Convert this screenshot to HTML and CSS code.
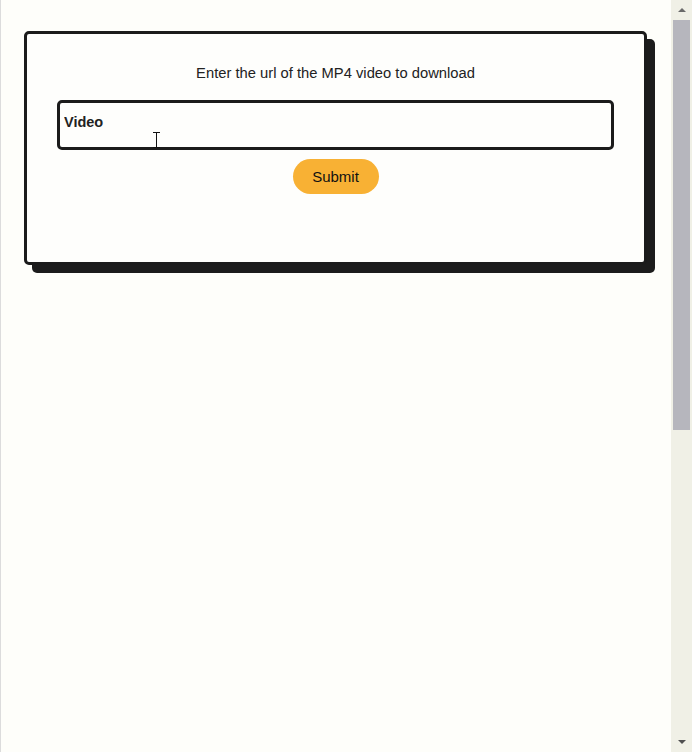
FILE: index.html
```html
<!DOCTYPE html>
<html lang="en">
<head>
<meta charset="utf-8">
<title>MP4 Downloader</title>
<link rel="stylesheet" href="styles.css">
</head>
<body>
<div class="page">
  <main class="main">
    <form class="card">
      <p class="title">Enter the url of the MP4 video to download</p>
      <div class="field">
        <input class="url" type="text" placeholder="Video">
        <svg class="ibeam" width="9" height="16" viewBox="0 0 9 16"><path d="M1 0.5h7M4.5 0.5v15M1 15.5h7" stroke="#111" stroke-width="1" fill="none"/></svg>
      </div>
      <button class="submit" type="button">Submit</button>
    </form>
  </main>
  <div class="scrollbar">
    <div class="arrow up"></div>
    <div class="track"><div class="thumb"></div></div>
    <div class="arrow down"></div>
  </div>
</div>
</body>
</html>
```
FILE: styles.css
```css
html, body {
  margin: 0;
  padding: 0;
  height: 100%;
  overflow: hidden;
}
body {
  background: #fefefa;
  font-family: "Liberation Sans", Arial, sans-serif;
  color: #222;
}
.page {
  display: flex;
  height: 100vh;
  border-left: 1px solid #dcdcdc;
  box-sizing: border-box;
}
.main {
  flex: 1;
  padding: 31px 24px 0 23px;
}
.card {
  margin: 0;
  border: 3px solid #1b1b1b;
  border-radius: 5px;
  box-shadow: 8px 8px 0 #1c1c1c;
  padding: 31px 30px 68px;
  display: flex;
  flex-direction: column;
  align-items: center;
  background: #fefefc;
}
.title {
  margin: 0;
  font-size: 14.75px;
  line-height: 17px;
  color: #222;
}
.field {
  position: relative;
  align-self: stretch;
  margin-top: 18px;
}
.url {
  display: block;
  width: 100%;
  box-sizing: border-box;
  height: 50px;
  border: 3px solid #1b1b1b;
  border-radius: 5px;
  background: transparent;
  padding: 0 4px 7px;
  font-family: "Liberation Sans", Arial, sans-serif;
  font-size: 14.5px;
  font-weight: bold;
  color: #222;
  outline: none;
}
.url::placeholder {
  color: #222;
  opacity: 1;
}
.ibeam {
  position: absolute;
  left: 95px;
  top: 32px;
}
.submit {
  margin-top: 9px;
  width: 86px;
  height: 35px;
  border: none;
  border-radius: 18px;
  background: #f8b134;
  font-family: "Liberation Sans", Arial, sans-serif;
  font-size: 15px;
  color: #111;
  padding: 0;
}
.scrollbar {
  width: 21px;
  display: flex;
  flex-direction: column;
  background: #f0f0e6;
}
.arrow {
  height: 20px;
  display: flex;
  align-items: center;
  justify-content: center;
}
.arrow::before {
  content: "";
  border-left: 4px solid transparent;
  border-right: 4px solid transparent;
}
.up::before {
  border-bottom: 4px solid #6a6a6a;
}
.down::before {
  border-top: 4px solid #505050;
}
.track {
  flex: 1;
  padding: 0 2px;
}
.thumb {
  height: 410px;
  background: #b6b6bd;
}
```
